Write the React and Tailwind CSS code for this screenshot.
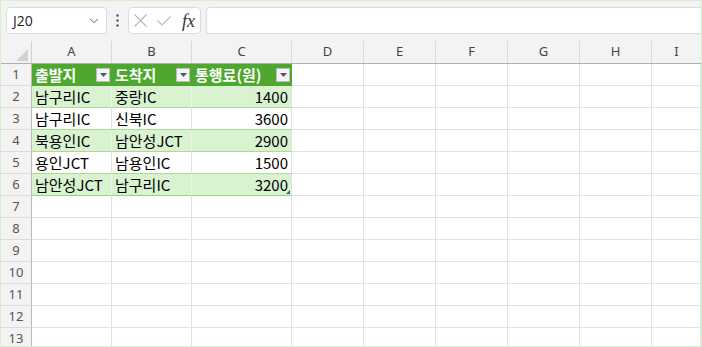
import React from "react";
import { ChevronDown } from "lucide-react";

const COLS = ["A", "B", "C", "D", "E", "F", "G", "H", "I"];
const HEAD = ["출발지", "도착지", "통행료(원)"];
const DATA = [
  ["남구리IC", "중랑IC", "1400"],
  ["남구리IC", "신북IC", "3600"],
  ["북용인IC", "남안성JCT", "2900"],
  ["용인JCT", "남용인IC", "1500"],
  ["남안성JCT", "남구리IC", "3200"],
];

const GRID = "grid grid-cols-[31px_80px_80px_100px_72px_72px_72px_72px_72px_1fr]";
const cellFont = { fontFamily: '"Noto Sans CJK KR", "Noto Sans", sans-serif' };

function FilterBtn() {
  return (
    <div className="w-[14px] h-[14px] bg-[#f4f4f4] border border-[#bdbdbd] flex items-center justify-center shrink-0">
      <svg width="7" height="4" viewBox="0 0 7 4">
        <path d="M0 0 L7 0 L3.5 4 Z" fill="#555" />
      </svg>
    </div>
  );
}

function RowHeader({ n }) {
  return (
    <div className="h-[22px] bg-[#f3f3f3] border-r border-r-[#b8b8b8] border-b border-b-[#dcdcdc] flex items-center justify-center text-[13px] text-[#555]" style={{ fontFamily: '"Noto Sans", sans-serif' }}>
      {n}
    </div>
  );
}

function EmptyCells() {
  return COLS.slice(3).map((c) => (
    <div key={c} className="h-[22px] bg-white border-r border-b border-[#e1e1e1]" />
  ));
}

export default function App() {
  return (
    <div className="w-[702px] h-[347px] overflow-hidden border border-[#d6efcc] bg-[#f3f3f3] flex flex-col">
      {/* formula bar */}
      <div className="h-[40px] shrink-0 flex items-start pt-[6px] pl-[5px] gap-0">
        <div className="w-[101px] h-[27px] bg-white border border-[#dcdcdc] rounded-[4px] flex items-center justify-between pl-[6px] pr-[5px]">
          <span className="text-[14px] text-[#222]" style={{ fontFamily: '"Open Sans", sans-serif' }}>J20</span>
          <ChevronDown size={14} strokeWidth={1.6} color="#555" />
        </div>
        <div className="w-[21px] h-[27px] flex items-center justify-center">
          <svg width="3" height="13" viewBox="0 0 3 13">
            <circle cx="1.5" cy="1.5" r="1.2" fill="#555" />
            <circle cx="1.5" cy="6.5" r="1.2" fill="#555" />
            <circle cx="1.5" cy="11.5" r="1.2" fill="#555" />
          </svg>
        </div>
        <div className="w-[73px] h-[27px] bg-white border border-[#dcdcdc] rounded-[4px] flex items-center pl-[5px]">
          <svg width="13" height="13" viewBox="0 0 13 13">
            <path d="M0.5 0.5 L12.5 12.5 M12.5 0.5 L0.5 12.5" stroke="#b8b8b8" strokeWidth="1.2" fill="none" />
          </svg>
          <svg className="ml-[10px]" width="14" height="10" viewBox="0 0 14 10">
            <path d="M0.5 4.5 L5 9 L13.5 0.5" stroke="#b8b8b8" strokeWidth="1.2" fill="none" />
          </svg>
          <span className="text-[18px] italic text-[#333] ml-[11px] leading-none" style={{ fontFamily: '"Liberation Serif", serif' }}>fx</span>
        </div>
        <div className="flex-1 h-[27px] ml-[5px] bg-white border border-[#dcdcdc] rounded-l-[4px] border-r-0" />
      </div>

      {/* column headers */}
      <div className={`${GRID} h-[23px] shrink-0 border-b border-[#b0b0b0]`}>
        <div className="border-r border-[#d0d0d0] flex items-end justify-end pr-[3px] pb-[2px]">
          <svg width="12" height="12" viewBox="0 0 12 12">
            <path d="M12 0 L12 12 L0 12 Z" fill="#d3d3d3" />
          </svg>
        </div>
        {COLS.map((c) => (
          <div key={c} className="flex items-center justify-center text-[13px] text-[#444] border-r border-[#dadada] last:border-r-0" style={{ fontFamily: '"Noto Sans", sans-serif' }}>
            {c}
          </div>
        ))}
      </div>

      {/* rows */}
      <div className={`${GRID} bg-white`} style={cellFont}>
        <RowHeader n={1} />
        {HEAD.map((h) => (
          <div key={h} className="h-[22px] bg-[#4ea72e] border-b border-[#4ea72e] flex items-center justify-between pl-[3px] pr-[2px] text-white font-bold text-[15px]">
            <span className="leading-none">{h}</span>
            <FilterBtn />
          </div>
        ))}
        <EmptyCells />

        {DATA.map((r, ri) => {
          const band = ri % 2 === 0;
          const last = ri === DATA.length - 1;
          const bg = band ? "bg-[#d9f2d0]" : "bg-white";
          const vline = band ? "border-r-[#e6f5e0]" : "border-r-[#e1e1e1]";
          const hline = last ? "border-b-[#8ed973]" : "border-b-[#a9dc9b]";
          return (
            <React.Fragment key={ri}>
              <RowHeader n={ri + 2} />
              <div className={`h-[22px] ${bg} border-r ${vline} border-b ${hline} flex items-center pl-[3px] text-[15px] text-black`}>
                <span className="leading-none">{r[0]}</span>
              </div>
              <div className={`h-[22px] ${bg} border-r ${vline} border-b ${hline} flex items-center pl-[3px] text-[15px] text-black`}>
                <span className="leading-none">{r[1]}</span>
              </div>
              <div className={`relative h-[22px] ${bg} border-r border-r-[#e1e1e1] border-b ${hline} flex items-center justify-end pr-[3px] text-[15px] text-black`}>
                <span className="leading-none">{r[2]}</span>
                {last && (
                  <svg className="absolute right-[1px] bottom-[1px]" width="4" height="4" viewBox="0 0 4 4">
                    <path d="M4 0 L4 4 L0 4 Z" fill="#3b5a9a" />
                  </svg>
                )}
              </div>
              <EmptyCells />
            </React.Fragment>
          );
        })}

        {[7, 8, 9, 10, 11, 12, 13].map((n) => (
          <React.Fragment key={n}>
            <RowHeader n={n} />
            <div className="h-[22px] border-r border-b border-[#e1e1e1]" />
            <div className="h-[22px] border-r border-b border-[#e1e1e1]" />
            <div className="h-[22px] border-r border-b border-[#e1e1e1]" />
            <EmptyCells />
          </React.Fragment>
        ))}
      </div>
    </div>
  );
}
